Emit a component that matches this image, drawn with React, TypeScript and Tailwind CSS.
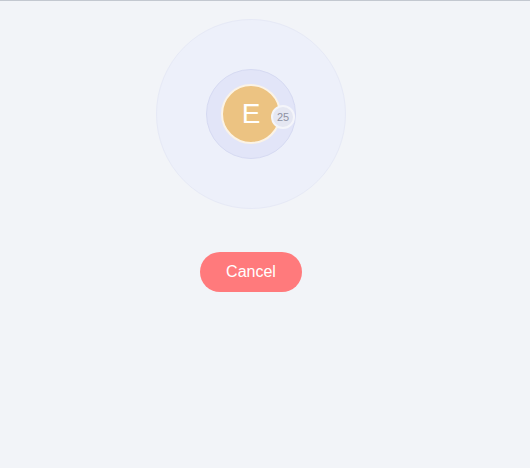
import React from "react";

export default function App() {
  return (
    <div className="min-h-[468px] w-[530px] bg-[#f2f4f8] border-t border-[#c3c8d0]" style={{ fontFamily: "'Liberation Sans', Arial, sans-serif" }}>
      <div className="w-[502px] flex flex-col items-center pt-[18px]">
        <div className="w-[190px] h-[190px] rounded-full bg-[#edf0fa] border border-[#e6e9f6] flex items-center justify-center">
          <div className="w-[90px] h-[90px] rounded-full bg-[#e2e5f8] border border-[#d6daf2] flex items-center justify-center">
            <div className="relative w-[60px] h-[60px] rounded-full bg-[#ecc382] border-2 border-[#fbf3e6] flex items-center justify-center">
              <span className="text-white text-[28px] leading-none font-light">E</span>
              <div className="absolute left-[48px] top-[19px] w-[24px] h-[24px] rounded-full bg-[#e5e7f2] border-2 border-[#f4f5fa] flex items-center justify-center">
                <span className="text-[11px] text-[#8e92a3] leading-none">25</span>
              </div>
            </div>
          </div>
        </div>
        <button className="mt-[43px] w-[102px] h-[40px] rounded-full bg-[#ff7a7c] text-white text-[16px]">
          Cancel
        </button>
      </div>
    </div>
  );
}
